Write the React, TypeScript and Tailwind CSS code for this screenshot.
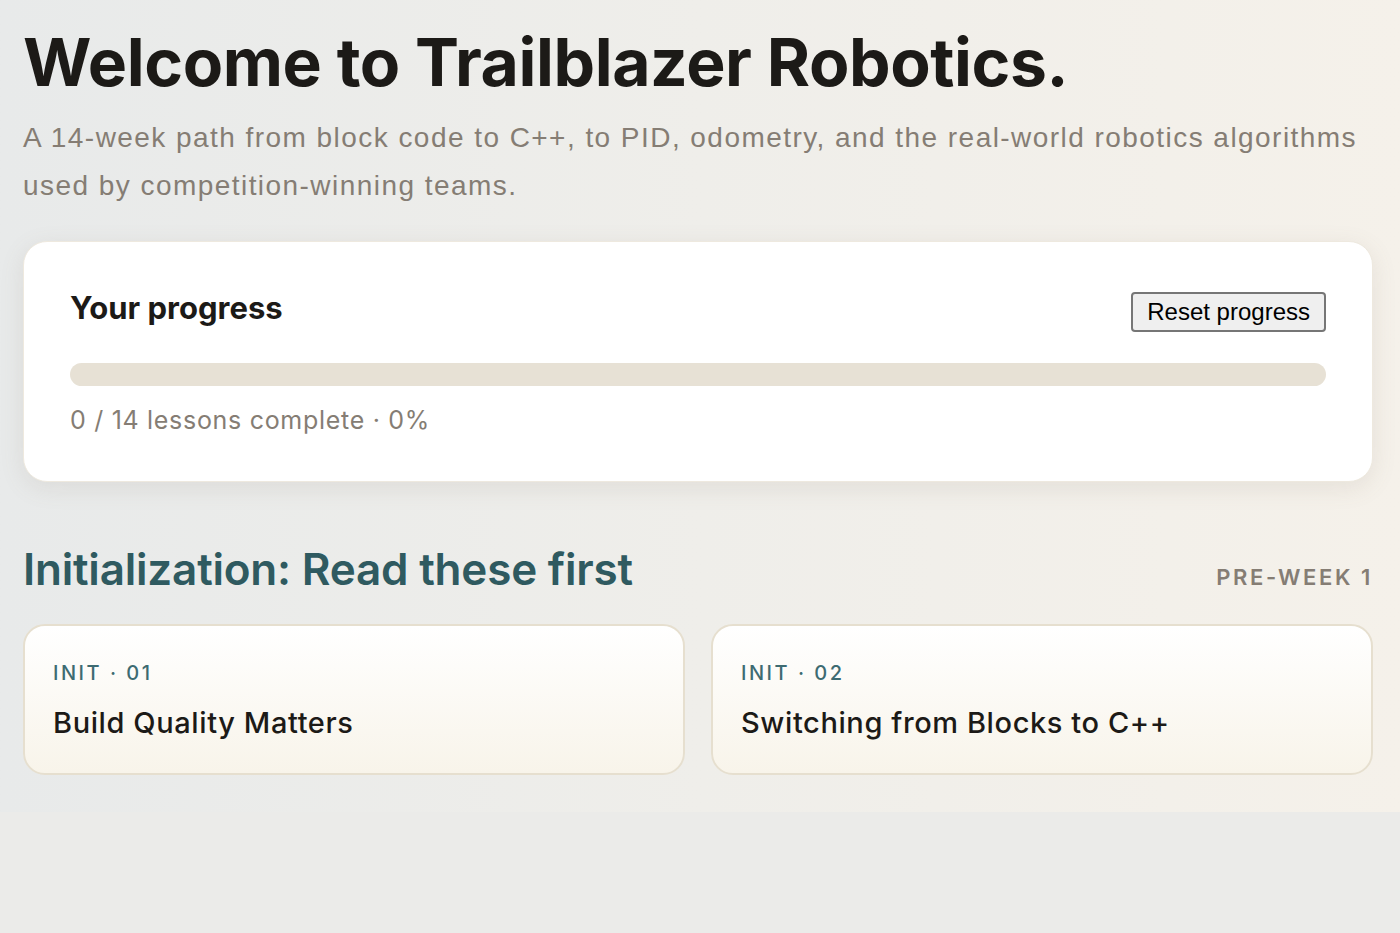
import React from "react";

const lessons = [
  { code: "INIT · 01", title: "Build Quality Matters" },
  { code: "INIT · 02", title: "Switching from Blocks to C++" },
];

export default function App() {
  return (
    <div className="min-h-[933px] bg-[#ebebe9]">
      <div className="bg-gradient-to-r from-[#e8eaea] via-[#efeeea] to-[#f5f1ea] pl-[23px] pr-[27px] pt-[24px] pb-[37px] font-['Inter',sans-serif]">
        <h1 className="text-[66px] leading-[76px] font-bold tracking-[-0.4px] text-[#1c1a17]">
          Welcome to Trailblazer Robotics.
        </h1>
        <p className="mt-[14px] text-[28px] leading-[48px] text-[#857d74] font-['Liberation_Sans',sans-serif] tracking-[1.45px]">
          A 14-week path from block code to C++, to PID, odometry, and the real-world robotics algorithms used by
          competition-winning teams.
        </p>

        <section className="mt-[31px] rounded-[24px] bg-white px-[46px] pt-[46px] pb-[46px] shadow-[0_6px_24px_rgba(120,110,90,0.12)] border border-[#eee9df]">
          <div className="flex items-start justify-between">
            <h2 className="text-[31px] leading-[40px] font-bold text-[#1c1a17]">Your progress</h2>
            <button className="mt-[4px] h-[40px] rounded-[4px] border-2 border-[#767676] bg-[#efefef] px-[14px] text-[24px] leading-none text-black font-['Liberation_Sans',sans-serif]">
              Reset progress
            </button>
          </div>
          <div className="mt-[31px] h-[23px] rounded-full bg-[#e7e1d5]" />
          <p className="mt-[19px] text-[25px] leading-[30px] text-[#857d74] tracking-[0.7px]">
            0 / 14 lessons complete · 0%
          </p>
        </section>

        <div className="mt-[60px] flex items-baseline justify-between">
          <h2 className="text-[44px] leading-[54px] font-semibold tracking-[-0.2px] text-[#2f5a60]">
            Initialization: Read these first
          </h2>
          <span className="text-[22px] font-semibold tracking-[2.6px] text-[#857d74]">PRE-WEEK 1</span>
        </div>

        <div className="mt-[28px] grid grid-cols-2 gap-[26px]">
          {lessons.map((l) => (
            <div
              key={l.code}
              className="h-[151px] rounded-[22px] border-2 border-[#e6dfcf] bg-gradient-to-b from-white to-[#f8f4ea] px-[28px] pt-[34px]"
            >
              <div className="text-[20px] leading-[26px] font-medium tracking-[2.5px] text-[#3d6b72]">{l.code}</div>
              <div className="mt-[20px] text-[29px] leading-[34px] font-medium tracking-[0.6px] text-[#1c1a17]">
                {l.title}
              </div>
            </div>
          ))}
        </div>
      </div>
    </div>
  );
}
